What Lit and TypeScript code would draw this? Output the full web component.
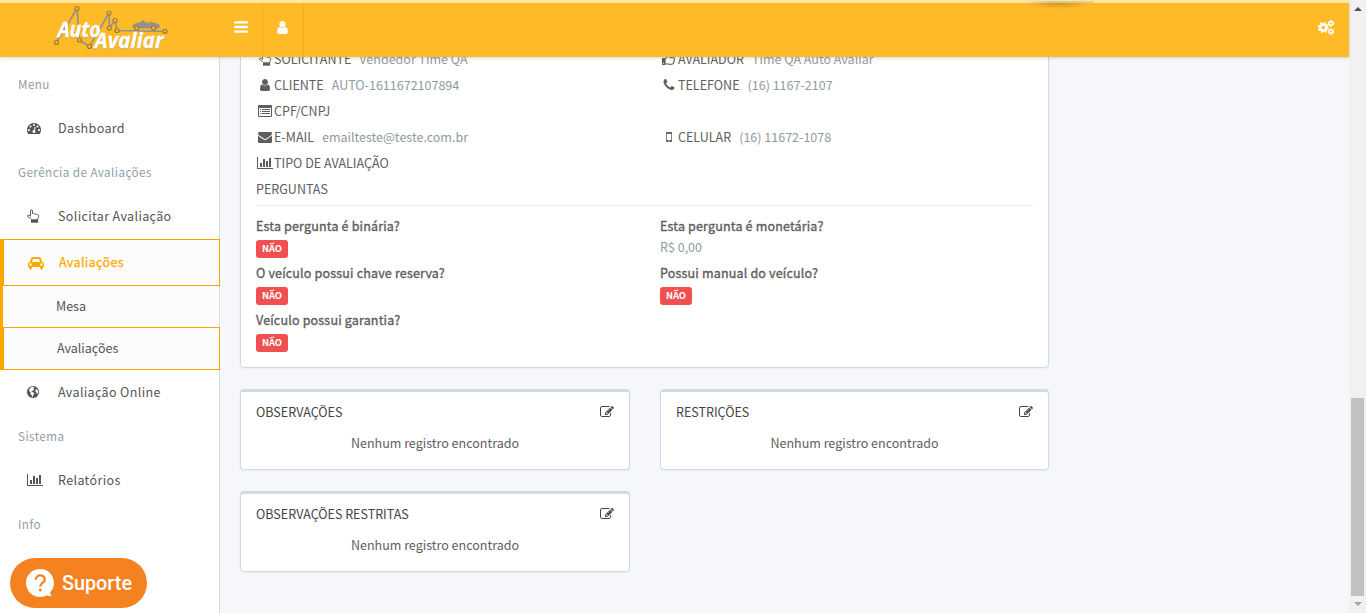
import { LitElement, html, css, svg } from "lit";
import { customElement } from "lit/decorators.js";

const P: Record<string, string> = {
  user: "M1536 1399q0 109-62.5 187t-150.5 78h-854q-88 0-150.5-78t-62.5-187q0-85 8.5-160.5t31.5-152 58.5-131 94-89 134.5-34.5q131 128 313 128t313-128q76 0 134.5 34.5t94 89 58.5 131 31.5 152 8.5 160.5zm-256-887q0 159-112.5 271.5t-271.5 112.5-271.5-112.5-112.5-271.5 112.5-271.5 271.5-112.5 271.5 112.5 112.5 271.5z",
  mail: "M1792 710v794q0 66-47 113t-113 47h-1472q-66 0-113-47t-47-113v-794q44 49 101 87 362 246 497 345 57 42 92.5 65.5t94.5 48 110 24.5h2q51 0 110-24.5t94.5-48 92.5-65.5q170-123 498-345 57-39 100-87zm0-294q0 79-49 151t-122 123q-376 261-468 325-10 7-42.5 31t-54 38.5-52 32.5-57.5 27-50 9h-2q-23 0-50-9t-57.5-27-52-32.5-54-38.5-42.5-31q-91-64-262-182.5t-205-142.5q-62-42-117-115.5t-55-136.5q0-78 41.5-130t118.5-52h1472q65 0 112.5 47t47.5 113z",
  chart: "M640 896v512h-256v-512h256zm384-512v1024h-256v-1024h256zm1024 1152v128h-2048v-1536h128v1408h1920zm-640-896v768h-256v-768h256zm384-384v1152h-256v-1152h256z",
  phone: "M1600 1240q0 27-10 70.5t-21 68.5q-21 50-122 106-94 51-186 51-27 0-53-3.5t-57.5-12.5-47-14.5-55.5-20.5-49-18q-98-35-175-83-127-79-264-216t-216-264q-48-77-83-175-3-9-18-49t-20.5-55.5-14.5-47-12.5-57.5-3.5-53q0-92 51-186 56-101 106-122 25-11 68.5-21t70.5-10q14 0 21 3 18 6 53 76 11 19 30 54t35 63.5 31 53.5q3 4 17.5 25t21.5 35.5 7 28.5q0 20-28.5 50t-62 55-62 53-28.5 46q0 9 5 22.5t8.5 20.5 14 24 11.5 19q76 137 174 235t235 174q2 1 19 11.5t24 14 20.5 8.5 22.5 5q18 0 46-28.5t53-62 55-62 50-28.5q14 0 28.5 7t35.5 21.5 25 17.5q25 15 53.5 31t63.5 35 54 30q70 35 76 53 3 7 3 21z",
  mobile: "M976 1408q0-33-23.5-56.5t-56.5-23.5-56.5 23.5-23.5 56.5 23.5 56.5 56.5 23.5 56.5-23.5 23.5-56.5zm208-160v-704q0-13-9.5-22.5t-22.5-9.5h-512q-13 0-22.5 9.5t-9.5 22.5v704q0 13 9.5 22.5t22.5 9.5h512q13 0 22.5-9.5t9.5-22.5zm-192-848q0-16-16-16h-160q-16 0-16 16t16 16h160q16 0 16-16zm288-16v1024q0 52-38 90t-90 38h-512q-52 0-90-38t-38-90v-1024q0-52 38-90t90-38h512q52 0 90 38t38 90z",
  bars: "M1664 1344v128q0 26-19 45t-45 19h-1408q-26 0-45-19t-19-45v-128q0-26 19-45t45-19h1408q26 0 45 19t19 45zm0-512v128q0 26-19 45t-45 19h-1408q-26 0-45-19t-19-45v-128q0-26 19-45t45-19h1408q26 0 45 19t19 45zm0-512v128q0 26-19 45t-45 19h-1408q-26 0-45-19t-19-45v-128q0-26 19-45t45-19h1408q26 0 45 19t19 45z",
  edit: "M888 1184l116-116-152-152-116 116v56h96v96h56zm440-720q-16-16-33 1l-350 350q-17 17-1 33t33-1l350-350q17-17 1-33zm80 594v190q0 119-84.5 203.5t-203.5 84.5h-832q-119 0-203.5-84.5t-84.5-203.5v-832q0-119 84.5-203.5t203.5-84.5h832q63 0 117 25 15 7 18 23 3 17-9 29l-49 49q-14 14-32 8-23-6-45-6h-832q-66 0-113 47t-47 113v832q0 66 47 113t113 47h832q66 0 113-47t47-113v-126q0-13 9-22l64-64q15-15 35-7t20 29zm-96-738l288 288-672 672h-288v-288zm444 132l-92 92-288-288 92-92q28-28 68-28t68 28l152 152q28 28 28 68t-28 68z",
  dash: "M384 1152q0-53-37.5-90.5t-90.5-37.5-90.5 37.5-37.5 90.5 37.5 90.5 90.5 37.5 90.5-37.5 37.5-90.5zm192-448q0-53-37.5-90.5t-90.5-37.5-90.5 37.5-37.5 90.5 37.5 90.5 90.5 37.5 90.5-37.5 37.5-90.5zm428 481l101-382q6-26-7.5-48.5t-38.5-29.5-48 6.5-30 39.5l-101 382q-60 5-107 43.5t-63 98.5q-20 77 20 146t117 89 146-20 89-117q16-60-6-117t-72-91zm660-33q0-53-37.5-90.5t-90.5-37.5-90.5 37.5-37.5 90.5 37.5 90.5 90.5 37.5 90.5-37.5 37.5-90.5zm-640-640q0-53-37.5-90.5t-90.5-37.5-90.5 37.5-37.5 90.5 37.5 90.5 90.5 37.5 90.5-37.5 37.5-90.5zm448 192q0-53-37.5-90.5t-90.5-37.5-90.5 37.5-37.5 90.5 37.5 90.5 90.5 37.5 90.5-37.5 37.5-90.5zm320 448q0 261-141 483-19 29-54 29h-1402q-35 0-54-29-141-221-141-483 0-182 71-348t191-286 286-191 348-71 348 71 286 191 191 286 71 348z",
  car: "M480 1088q0-66-47-113t-113-47-113 47-47 113 47 113 113 47 113-47 47-113zm36-320h1016l-89-357q-2-8-14-17.5t-21-9.5h-768q-9 0-21 9.5t-14 17.5zm1372 320q0-66-47-113t-113-47-113 47-47 113 47 113 113 47 113-47 47-113zm160-96v384q0 14-9 23t-23 9h-96v128q0 80-56 136t-136 56-136-56-56-136v-128h-1024v128q0 80-56 136t-136 56-136-56-56-136v-128h-96q-14 0-23-9t-9-23v-384q0-93 65.5-158.5t158.5-65.5h28l105-419q23-94 104-157.5t179-63.5h768q98 0 179 63.5t104 157.5l105 419h28q93 0 158.5 65.5t65.5 158.5z",
};
const WIDE = new Set(["chart", "car"]);

/* Icons drawn directly on a 14-unit grid */
const DRAWN: Record<string, unknown> = {
  hand: svg`<path fill="none" stroke="currentColor" stroke-width=".95" d="M5.500 10.500C4.800 9 1.300 8.300 1.400 6.900C1.500 5.700 3.300 6.100 4.500 7.300V1.800C4.500 .4 6.500 .4 6.500 1.800V4.500C8 4.300 8.600 4.700 9 5.200C10 4.900 10.700 5.200 11.100 5.700C12.200 5.500 12.900 6.100 12.700 7.300C12.500 8.600 11.800 9.300 11.600 10.500"/><path fill="currentColor" d="M5 10.300h7.100v3.400H5z"/>`,
  list: svg`<path fill="currentColor" fill-rule="evenodd" d="M1 1h12a1 1 0 0 1 1 1v10a1 1 0 0 1-1 1H1a1 1 0 0 1-1-1V2a1 1 0 0 1 1-1zM1 4v8h12V4z"/><path fill="currentColor" d="M2 5h1v1H2zM4 5h8v1H4zM2 7h1v1H2zM4 7h8v1H4zM2 9h1v1H2zM4 9h8v1H4z"/>`,
  thumb: svg`<path fill="currentColor" fill-rule="evenodd" d="M0 6h3.6v7H0zM1 10.800h1v1H1z"/><path fill="none" stroke="currentColor" stroke-width="1.1" d="M3.5 6.5C5 6 6 4 6.500 1.500C9 1.500 8.500 4 8 5.800H11.500C13 6 12.500 7.500 12 8C12.500 9 12 9.800 11.500 10C11.800 11.500 11 12.300 9.500 12.300C7 12.500 5.500 11.800 3.500 11.800"/>`,
  globe: svg`<circle cx="7" cy="7" r="6.1" fill="currentColor"/><path fill="#fff" d="M5.800 1.700L8.300 2L7.300 3.300L8.300 4.500L6.600 5.700L5.300 6.200L7 7.300L8.400 8.600L7.200 10.600L6.300 12.300L5.700 10.300L4.400 8.800L4.600 7.300L2.800 5.600L3.600 3.800zM10.300 4L11.700 5L12.300 7L11.500 9L10.500 8.300L10.300 7L9.200 6.500L9.600 5z"/>`,
  cogs: svg`<g fill="none" stroke="currentColor"><circle cx="4.9" cy="7" r="3" stroke-width="2.500"/><circle cx="4.9" cy="7" r="4.600" stroke-width="1.300" stroke-dasharray="1.800 1.813"/><circle cx="12.100" cy="3.200" r="1.700" stroke-width="1.500"/><circle cx="12.100" cy="3.200" r="2.600" stroke-width="1" stroke-dasharray="1.360 1.363"/><circle cx="12.100" cy="10.800" r="1.700" stroke-width="1.500"/><circle cx="12.100" cy="10.800" r="2.600" stroke-width="1" stroke-dasharray="1.360 1.363"/></g>`,
};

const icon = (name: string, size = 14) => {
  const drawn = DRAWN[name];
  const w = WIDE.has(name) ? 2048 : 1792;
  return drawn
    ? html`<svg class="ic" width=${size * (name === "cogs" ? 15 / 14 : 1)} height=${size} viewBox="0 0 ${name === "cogs" ? 15 : 14} 14">${drawn}</svg>`
    : html`<svg class="ic" width=${(size * w) / 1792} height=${size} viewBox="0 0 ${w} 1792"><path fill="currentColor" d=${P[name]} /></svg>`;
};

const fields: ([string, string, string] | null)[][] = [
  [["hand", "SOLICITANTE", "Vendedor Time QA"], ["thumb", "AVALIADOR", "Time QA Auto Avaliar"]],
  [["user", "CLIENTE", "AUTO-1611672107894"], ["phone", "TELEFONE", "(16) 1167-2107"]],
  [["list", "CPF/CNPJ", ""], null],
  [["mail", "E-MAIL", "emailteste@teste.com.br"], ["mobile", "CELULAR", "(16) 11672-1078"]],
  [["chart", "TIPO DE AVALIAÇÃO", ""], null],
];

const questions: [string, string][] = [
  ["Esta pergunta é binária?", "NÃO"],
  ["Esta pergunta é monetária?", "R$ 0,00"],
  ["O veículo possui chave reserva?", "NÃO"],
  ["Possui manual do veículo?", "NÃO"],
  ["Veículo possui garantia?", "NÃO"],
];

@customElement("app-root")
export class AppRoot extends LitElement {
  static styles = css`
    :host { display: block; width: 1366px; height: 613px; overflow: hidden; font-family: "Noto Sans CJK SC", sans-serif; font-size: 12.53px; color: #5e5e5e; background: #f5f7fb; }
    * { box-sizing: border-box; }
    .window { position: relative; display: flex; height: 613px; }
    .page { flex: 1; display: flex; flex-direction: column; min-width: 0; }
    .ic { display: block; flex: none; overflow: visible; }
    header { position: relative; z-index: 2; height: 57px; flex: none; background: #ffba28; border-top: 3px solid #ffe6a4; display: flex; color: #fff; box-shadow: 0 1px 3px rgba(0,0,0,.16); }
    .logo { width: 220px; flex: none; }
    .logo svg { display: block; }
    .hbtn { display: flex; align-items: center; justify-content: center; padding-bottom: 6px; width: 42px; }
    .hbtn.ruled { border: solid #ffad0c; border-width: 0 1px; padding: 0 1px 5px 0; }
    .hbtn.end { margin-left: auto; width: 45px; padding-bottom: 5px; }
    .tab { position: absolute; left: 1022px; top: -3px; width: 72px; height: 3px; background: linear-gradient(#ffe6a4 0 1px, transparent 1px), linear-gradient(90deg, #ffe6a4, #d9c48f 40%, #e6cf91); }
    .tabglow { position: absolute; left: 1026px; top: 0; width: 66px; height: 6px; background: radial-gradient(ellipse at 50% 0, rgba(140,95,10,.4), rgba(140,95,10,0) 70%); }
    .body { flex: 1; display: flex; min-height: 0; }
    nav { position: relative; width: 220px; flex: none; background: #fff; border-right: 1px solid #d9dcde; padding-top: 5px; letter-spacing: .36px; }
    .head { height: 44px; padding: 0 0 2px 18px; display: flex; align-items: center; color: #919da8; font-size: 11.65px; letter-spacing: .45px; }
    .item { height: 44px; padding: 0 0 2px 27px; display: flex; align-items: center; color: #555; }
    .slot { width: 16px; margin-right: 15px; padding-top: 2px; flex: none; }
    .slot.pull { margin-left: -1px; margin-right: 16px; }
    .group { width: 220px; margin-top: 1px; border-left: 3px solid #ffa900; background: #fcfcfc; }
    .on { height: 47px; padding-left: 24px; border: 1px solid #f5a500; color: #ffa900; -webkit-text-stroke: .25px #ffa900; }
    .sub { height: 41px; padding: 0 0 2px 53px; display: flex; align-items: center; letter-spacing: 0; border-right: 1px solid #d9dcde; color: #555; }
    .sub.cur { height: 43px; border: 1px solid #f5a500; }
    main { flex: 1; overflow: hidden; padding: 0 0 0 20px; min-width: 0; }
    .wrap { width: 809px; margin-top: -20px; }
    .panel { background: #fff; border: 1px solid #cfdbe4; border-radius: 4px; box-shadow: 0 1px 2px rgba(0,0,0,.05); }
    .info { height: 331px; padding: 9px 15px 0; }
    .row { display: grid; grid-template-columns: 404px 1fr; height: 26px; align-items: center; padding-bottom: 4px; }
    .field { display: flex; align-items: center; white-space: nowrap; }
    .fw { width: 18px; padding-top: 1px; display: flex; justify-content: center; flex: none; }
    .field .val { margin-left: 8px; }
    .val { color: #8f9ba1; }
    .quest { border-top: 1px solid #e6e9eb; display: grid; grid-template-columns: 404px 1fr; grid-auto-rows: 47px; padding-top: 10px; margin-top: 2px; }
    .q { line-height: 20px; height: 20px; letter-spacing: .17px; -webkit-text-stroke: .35px #5e5e5e; }
    .badge { display: block; width: 32px; height: 18px; margin-top: 4px; border-radius: 3px; background: #f05050; color: #fff; font-size: 9.4px; font-weight: 700; line-height: 16px; text-align: center; }
    .money { line-height: 20px; margin-top: 1px; }
    .cards { display: grid; grid-template-columns: 390px 389px; gap: 21px 30px; margin-top: 21px; }
    .card { height: 81px; border-top-width: 3px; padding: 9px 15px; }
    .title { display: flex; justify-content: space-between; align-items: center; height: 20px; color: #444; }
    .title .ic { margin-top: 2px; }
    .empty { text-align: center; line-height: 20px; margin-top: 12px; }
    .scroll { width: 17px; background: #f1f1f1; display: flex; flex-direction: column; align-items: center; flex: none; }
    .up { border: 4px solid transparent; border-top: 0; border-bottom: 4px solid #505050; margin-top: 7px; }
    .thumb { width: 13px; height: 198px; background: #c1c1c1; margin-top: 387px; }
    .down { border: 4px solid transparent; border-bottom: 0; border-top: 4px solid #a3a3a3; margin-top: 6px; }
    .help { position: absolute; z-index: 3; left: 10px; top: 558px; width: 137px; height: 50px; border-radius: 25px; background: #f58220; color: #fff; display: flex; align-items: center; padding-left: 16px; gap: 7px; font: 500 19.8px Roboto, sans-serif; }
  `;

  private field(f: [string, string, string] | null) {
    return f
      ? html`<div class="field"><span class="fw">${icon(f[0])}</span><span>${f[1]}</span><span class="val">${f[2]}</span></div>`
      : html`<div></div>`;
  }

  private item(ic: string, label: string, extra = "") {
    const pull = ic in DRAWN ? "pull" : "";
    return html`<div class="item ${extra}"><span class="slot ${pull}">${icon(ic)}</span>${label}</div>`;
  }

  private card(title: string) {
    return html`<section class="panel card">
      <div class="title"><span>${title}</span>${icon("edit", 14)}</div>
      <div class="empty">Nenhum registro encontrado</div>
    </section>`;
  }

  private logo() {
    const dots = [[56.5, 39.5], [77, 5.500], [79.500, 37], [89.500, 43.500], [109, 10], [109.300, 25], [115, 17.500], [117, 27.500], [165, 28.300]];
    return svg`<svg width="220" height="54" viewBox="0 0 220 54">
      <path d="M56.5 39.5L77 5.5L79.5 37L89.5 43.5L109 10L109.300 25L115 17.500L117 27.500L165 28.300" fill="none" stroke="#96928b" stroke-width="1.700"/>
      <path d="M132.500 24C132 21 135 20 139 19.700L144 16.800L145 19.600H151L148 17.200L154 19.700C158 20 160 21.500 160 24.500L157 25.500H134z" fill="#96928b"/>
      <g fill="#ffba28" stroke="#9a7d32" stroke-width="1.200">${dots.map(([x, y]) => svg`<circle cx=${x} cy=${y} r="2"/>`)}<circle cx="136.500" cy="25" r="2"/><circle cx="153.500" cy="25" r="2"/></g>
      <g font-family="Open Sans" font-weight="700" font-style="italic" fill="#fff" stroke="#fff" stroke-width=".4" style="filter:drop-shadow(.5px 1px .5px #c9a054)">
        <text x="57.500" y="34" font-size="20.500" textLength="43" lengthAdjust="spacingAndGlyphs">Auto</text>
        <text x="94.500" y="45" font-size="21.500" textLength="69" lengthAdjust="spacingAndGlyphs">Avaliar</text>
      </g>
    </svg>`;
  }

  render() {
    return html`<div class="window">
      <div class="page">
        <header>
          <div class="logo">${this.logo()}</div>
          <div class="hbtn">${icon("bars", 16)}</div>
          <div class="hbtn ruled">${icon("user", 15)}</div>
          <div class="hbtn end">${icon("cogs", 15)}</div>
          <div class="tab"></div><div class="tabglow"></div>
        </header>
        <div class="body">
          <nav>
            <div class="head">Menu</div>
            ${this.item("dash", "Dashboard")}
            <div class="head">Gerência de Avaliações</div>
            ${this.item("hand", "Solicitar Avaliação")}
            <div class="group">
              ${this.item("car", "Avaliações", "on")}
              <div class="sub">Mesa</div>
              <div class="sub cur">Avaliações</div>
            </div>
            ${this.item("globe", "Avaliação Online")}
            <div class="head">Sistema</div>
            ${this.item("chart", "Relatórios")}
            <div class="head">Info</div>
          </nav>
          <main>
            <div class="wrap">
              <section class="panel info">
                ${fields.map((r) => html`<div class="row">${r.map((f) => this.field(f))}</div>`)}
                <div class="row"><span>PERGUNTAS</span></div>
                <div class="quest">
                  ${questions.map(([q, a]) => html`<div><div class="q">${q}</div>${a === "NÃO" ? html`<span class="badge">${a}</span>` : html`<div class="val money">${a}</div>`}</div>`)}
                </div>
              </section>
              <div class="cards">
                ${this.card("OBSERVAÇÕES")}${this.card("RESTRIÇÕES")}${this.card("OBSERVAÇÕES RESTRITAS")}
              </div>
            </div>
          </main>
        </div>
      </div>
      <div class="scroll"><div class="up"></div><div class="thumb"></div><div class="down"></div></div>
      <div class="help">
        <svg class="ic" width="29" height="29" viewBox="0 0 29 29"><path fill="#fff" d="M14 0a13.800 13.800 0 1 0 0 28c3 0 5-.8 7-1.700c1.700 1 3.300 1 4.800.8c-1-1-1.500-2-1.600-3.800A13.900 13.900 0 0 0 14 0z"/><path d="M9.800 10.800C9.800 5 18.800 5 18.800 10.500C18.800 14 14.300 13.800 14.300 17.500" fill="none" stroke="#f58220" stroke-width="2.300"/><circle cx="14.300" cy="21" r="1.500" fill="#f58220"/></svg>
        <span>Suporte</span>
      </div>
    </div>`;
  }
}
